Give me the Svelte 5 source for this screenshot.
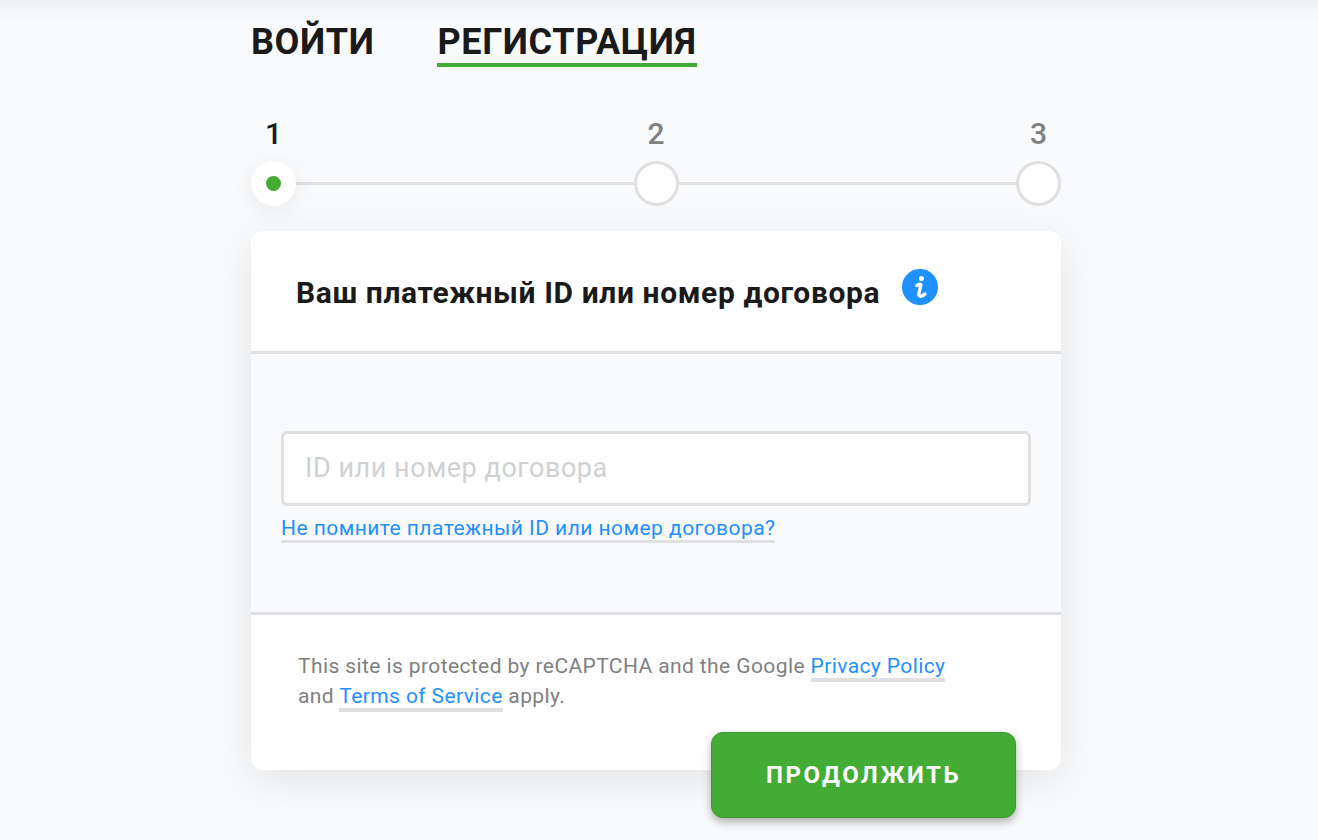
<script>
  const steps = [1, 2, 3]
  let active = 1
</script>

<div class="page">
  <main class="wrap">
    <nav class="tabs">
      <button type="button" class="tab">ВОЙТИ</button>
      <button type="button" class="tab current">РЕГИСТРАЦИЯ</button>
    </nav>

    <ol class="steps">
      {#each steps as step}
        <li class="step" class:active={step === active}>
          <span class="num">{step}</span>
          <span class="dot"></span>
        </li>
      {/each}
    </ol>

    <section class="card">
      <header class="card-head">
        <h2>Ваш платежный ID или номер договора</h2>
        <svg class="info" viewBox="0 0 36 36" width="36" height="36" aria-hidden="true">
          <circle cx="18" cy="18" r="18" fill="#1e90ff" />
          <circle cx="19.4" cy="9.4" r="2.5" fill="#fff" />
          <path d="M14.8 16.4c1.5-.9 2.6-1.2 3.6-1.2.5 0 .6.5.4 1.2l-1.8 7.8c-.5 2 .2 3 1.6 3 1.5 0 2.9-.8 4.4-2.2" fill="none" stroke="#fff" stroke-width="3.4" stroke-linecap="round" stroke-linejoin="round" />
        </svg>
      </header>

      <div class="card-body">
        <input type="text" placeholder="ID или номер договора" />
        <a href="#forgot" class="link">Не помните платежный ID или номер договора?</a>
      </div>

      <footer class="card-foot">
        <p>
          This site is protected by reCAPTCHA and the Google
          <a href="#privacy" class="link">Privacy Policy</a><br />
          and <a href="#terms" class="link">Terms of Service</a> apply.
        </p>
        <button type="button" class="submit">ПРОДОЛЖИТЬ</button>
      </footer>
    </section>
  </main>
</div>

<style>
  :global(body) {
    margin: 0;
    background: #f9fafc;
    font-family: Roboto, "Liberation Sans", sans-serif;
  }

  .page {
    min-height: 840px;
    box-sizing: border-box;
    padding-left: 251px;
    overflow: hidden;
    background: linear-gradient(#f0f1f3, #f9fafc 22px);
  }

  .wrap {
    width: 810px;
  }

  .tabs {
    display: flex;
    gap: 63px;
    padding-top: 19px;
    height: 48px;
  }

  .tab {
    height: 48px;
    padding: 0;
    border: 0;
    border-bottom: 4px solid transparent;
    background: none;
    color: #1a1a1a;
    font: 700 36px/46px Roboto, sans-serif;
    letter-spacing: 0.6px;
    box-sizing: border-box;
  }

  .tab.current {
    border-bottom-color: #43ac35;
  }

  .steps {
    display: flex;
    justify-content: space-between;
    list-style: none;
    margin: 0;
    padding: 0;
    margin-top: 49px;
    position: relative;
  }

  .steps::before {
    content: "";
    position: absolute;
    left: 20px;
    right: 20px;
    bottom: 21px;
    height: 3px;
    background: #e0e0e2;
  }

  .step {
    position: relative;
    display: flex;
    flex-direction: column;
    align-items: center;
    gap: 9px;
  }

  .num {
    color: #808080;
    font-size: 30px;
    line-height: 36px;
    font-weight: 500;
  }

  .step.active .num {
    color: #1a1a1a;
  }

  .dot {
    width: 45px;
    height: 45px;
    box-sizing: border-box;
    border: 3px solid #e0e0e2;
    border-radius: 50%;
    background: #fff;
    display: flex;
    align-items: center;
    justify-content: center;
  }

  .step.active .dot {
    border-color: #fff;
    box-shadow: 0 5px 25px rgba(0, 0, 0, 0.07);
  }

  .step.active .dot::after {
    content: "";
    width: 15px;
    height: 15px;
    border-radius: 50%;
    background: #43ac35;
  }

  .card {
    margin-top: 25px;
    background: #fff;
    border-radius: 12px;
    box-shadow: 0 10px 40px rgba(0, 0, 0, 0.09);
  }

  .card-head {
    height: 123px;
    box-sizing: border-box;
    padding: 38px 45px 0;
    border-bottom: 3px solid #e0e0e2;
    display: flex;
    align-items: flex-start;
    gap: 22px;
  }

  h2 {
    margin: 0;
    padding-top: 6px;
    color: #1a1a1a;
    font-size: 30px;
    line-height: 36px;
    font-weight: 700;
    letter-spacing: 0.6px;
  }

  .card-body {
    height: 261px;
    box-sizing: border-box;
    padding: 77px 30px 0;
    background: #f9fafc;
    border-bottom: 3px solid #e0e0e2;
  }

  input {
    display: block;
    width: 100%;
    height: 75px;
    box-sizing: border-box;
    padding: 0 21px 2px;
    border: 3px solid #e0e0e2;
    border-radius: 6px;
    background: #fff;
    font: 400 27px Roboto, sans-serif;
    letter-spacing: 0.55px;
    outline: none;
  }

  input::placeholder {
    color: #d0d2d2;
    opacity: 1;
  }

  .link {
    color: #1e90ff;
    text-decoration: none;
    border-bottom: 4px solid #e0e0e2;
    font-size: 21px;
    letter-spacing: 0.4px;
  }

  .card-body .link {
    display: inline-block;
    margin-top: 10px;
    line-height: 24px;
    border-bottom-width: 3px;
    letter-spacing: 0.45px;
  }

  .card-foot {
    height: 155px;
    box-sizing: border-box;
    padding: 36px 47px 0;
    position: relative;
  }

  p {
    margin: 0;
    color: #808080;
    font-size: 21px;
    line-height: 30px;
    letter-spacing: 0.4px;
  }

  .submit {
    position: absolute;
    right: 45px;
    bottom: -48px;
    width: 305px;
    height: 86px;
    border: 1px solid #3a9a2e;
    border-radius: 12px;
    background: #43ac35;
    color: #fff;
    font: 700 24px Roboto, sans-serif;
    letter-spacing: 2.5px;
    box-shadow: 0 4px 8px rgba(0, 0, 0, 0.3);
  }
</style>
